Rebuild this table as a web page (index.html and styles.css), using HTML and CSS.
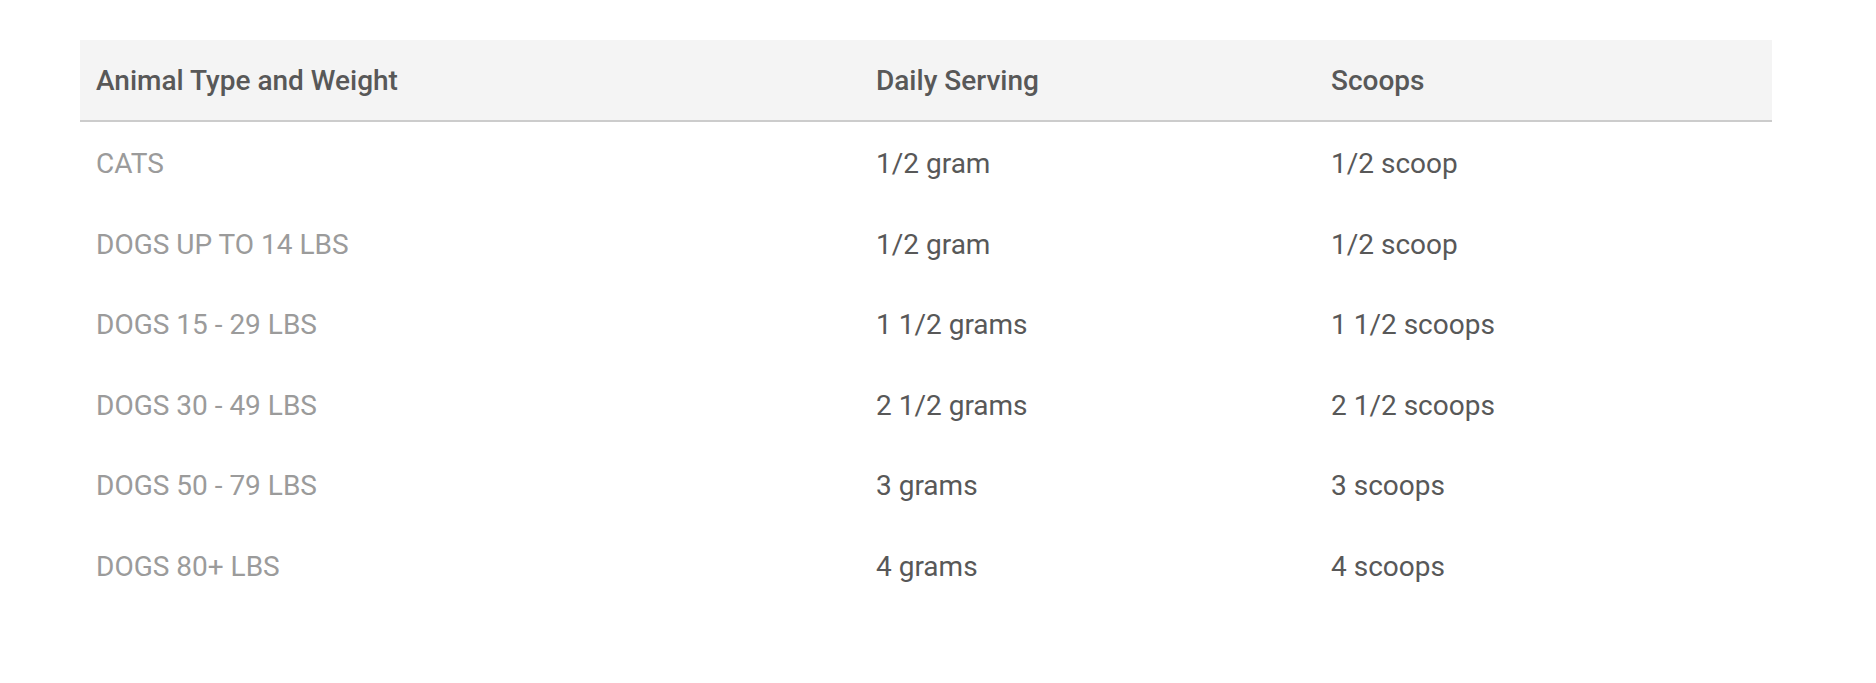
FILE: index.html
```html
<!DOCTYPE html>
<html>
<head>
<meta charset="utf-8">
<link rel="stylesheet" href="styles.css">
</head>
<body>
<div class="page">
  <table class="feed">
    <colgroup>
      <col class="c1"><col class="c2"><col class="c3">
    </colgroup>
    <thead>
      <tr><th>Animal Type and Weight</th><th>Daily Serving</th><th>Scoops</th></tr>
    </thead>
    <tbody>
      <tr><td class="animal">CATS</td><td>1/2 gram</td><td>1/2 scoop</td></tr>
      <tr><td class="animal">DOGS UP TO 14 LBS</td><td>1/2 gram</td><td>1/2 scoop</td></tr>
      <tr><td class="animal">DOGS 15 - 29 LBS</td><td>1 1/2 grams</td><td>1 1/2 scoops</td></tr>
      <tr><td class="animal">DOGS 30 - 49 LBS</td><td>2 1/2 grams</td><td>2 1/2 scoops</td></tr>
      <tr><td class="animal">DOGS 50 - 79 LBS</td><td>3 grams</td><td>3 scoops</td></tr>
      <tr><td class="animal">DOGS 80+ LBS</td><td>4 grams</td><td>4 scoops</td></tr>
    </tbody>
  </table>
</div>
</body>
</html>
```
FILE: styles.css
```css
html, body {
  margin: 0;
  padding: 0;
  background: #ffffff;
}
.page {
  padding: 40px 104px 0 80px;
  font-family: Roboto, "Liberation Sans", Arial, sans-serif;
}
.feed {
  width: 1692px;
  border-collapse: collapse;
  table-layout: fixed;
}
.c1 { width: 780px; }
.c2 { width: 455px; }
.c3 { width: 457px; }
.feed th {
  background: #f4f4f4;
  color: #585858;
  font-size: 28px;
  font-weight: 500;
  line-height: 32px;
  text-align: left;
  padding: 25px 16px 23px 16px;
  border-bottom: 2px solid #cccccc;
}
.feed td {
  color: #585858;
  font-size: 28px;
  font-weight: 400;
  line-height: 32px;
  padding: 26px 16px 22.6px 16px;
}
.feed td.animal {
  color: #9b9b9b;
}
```
